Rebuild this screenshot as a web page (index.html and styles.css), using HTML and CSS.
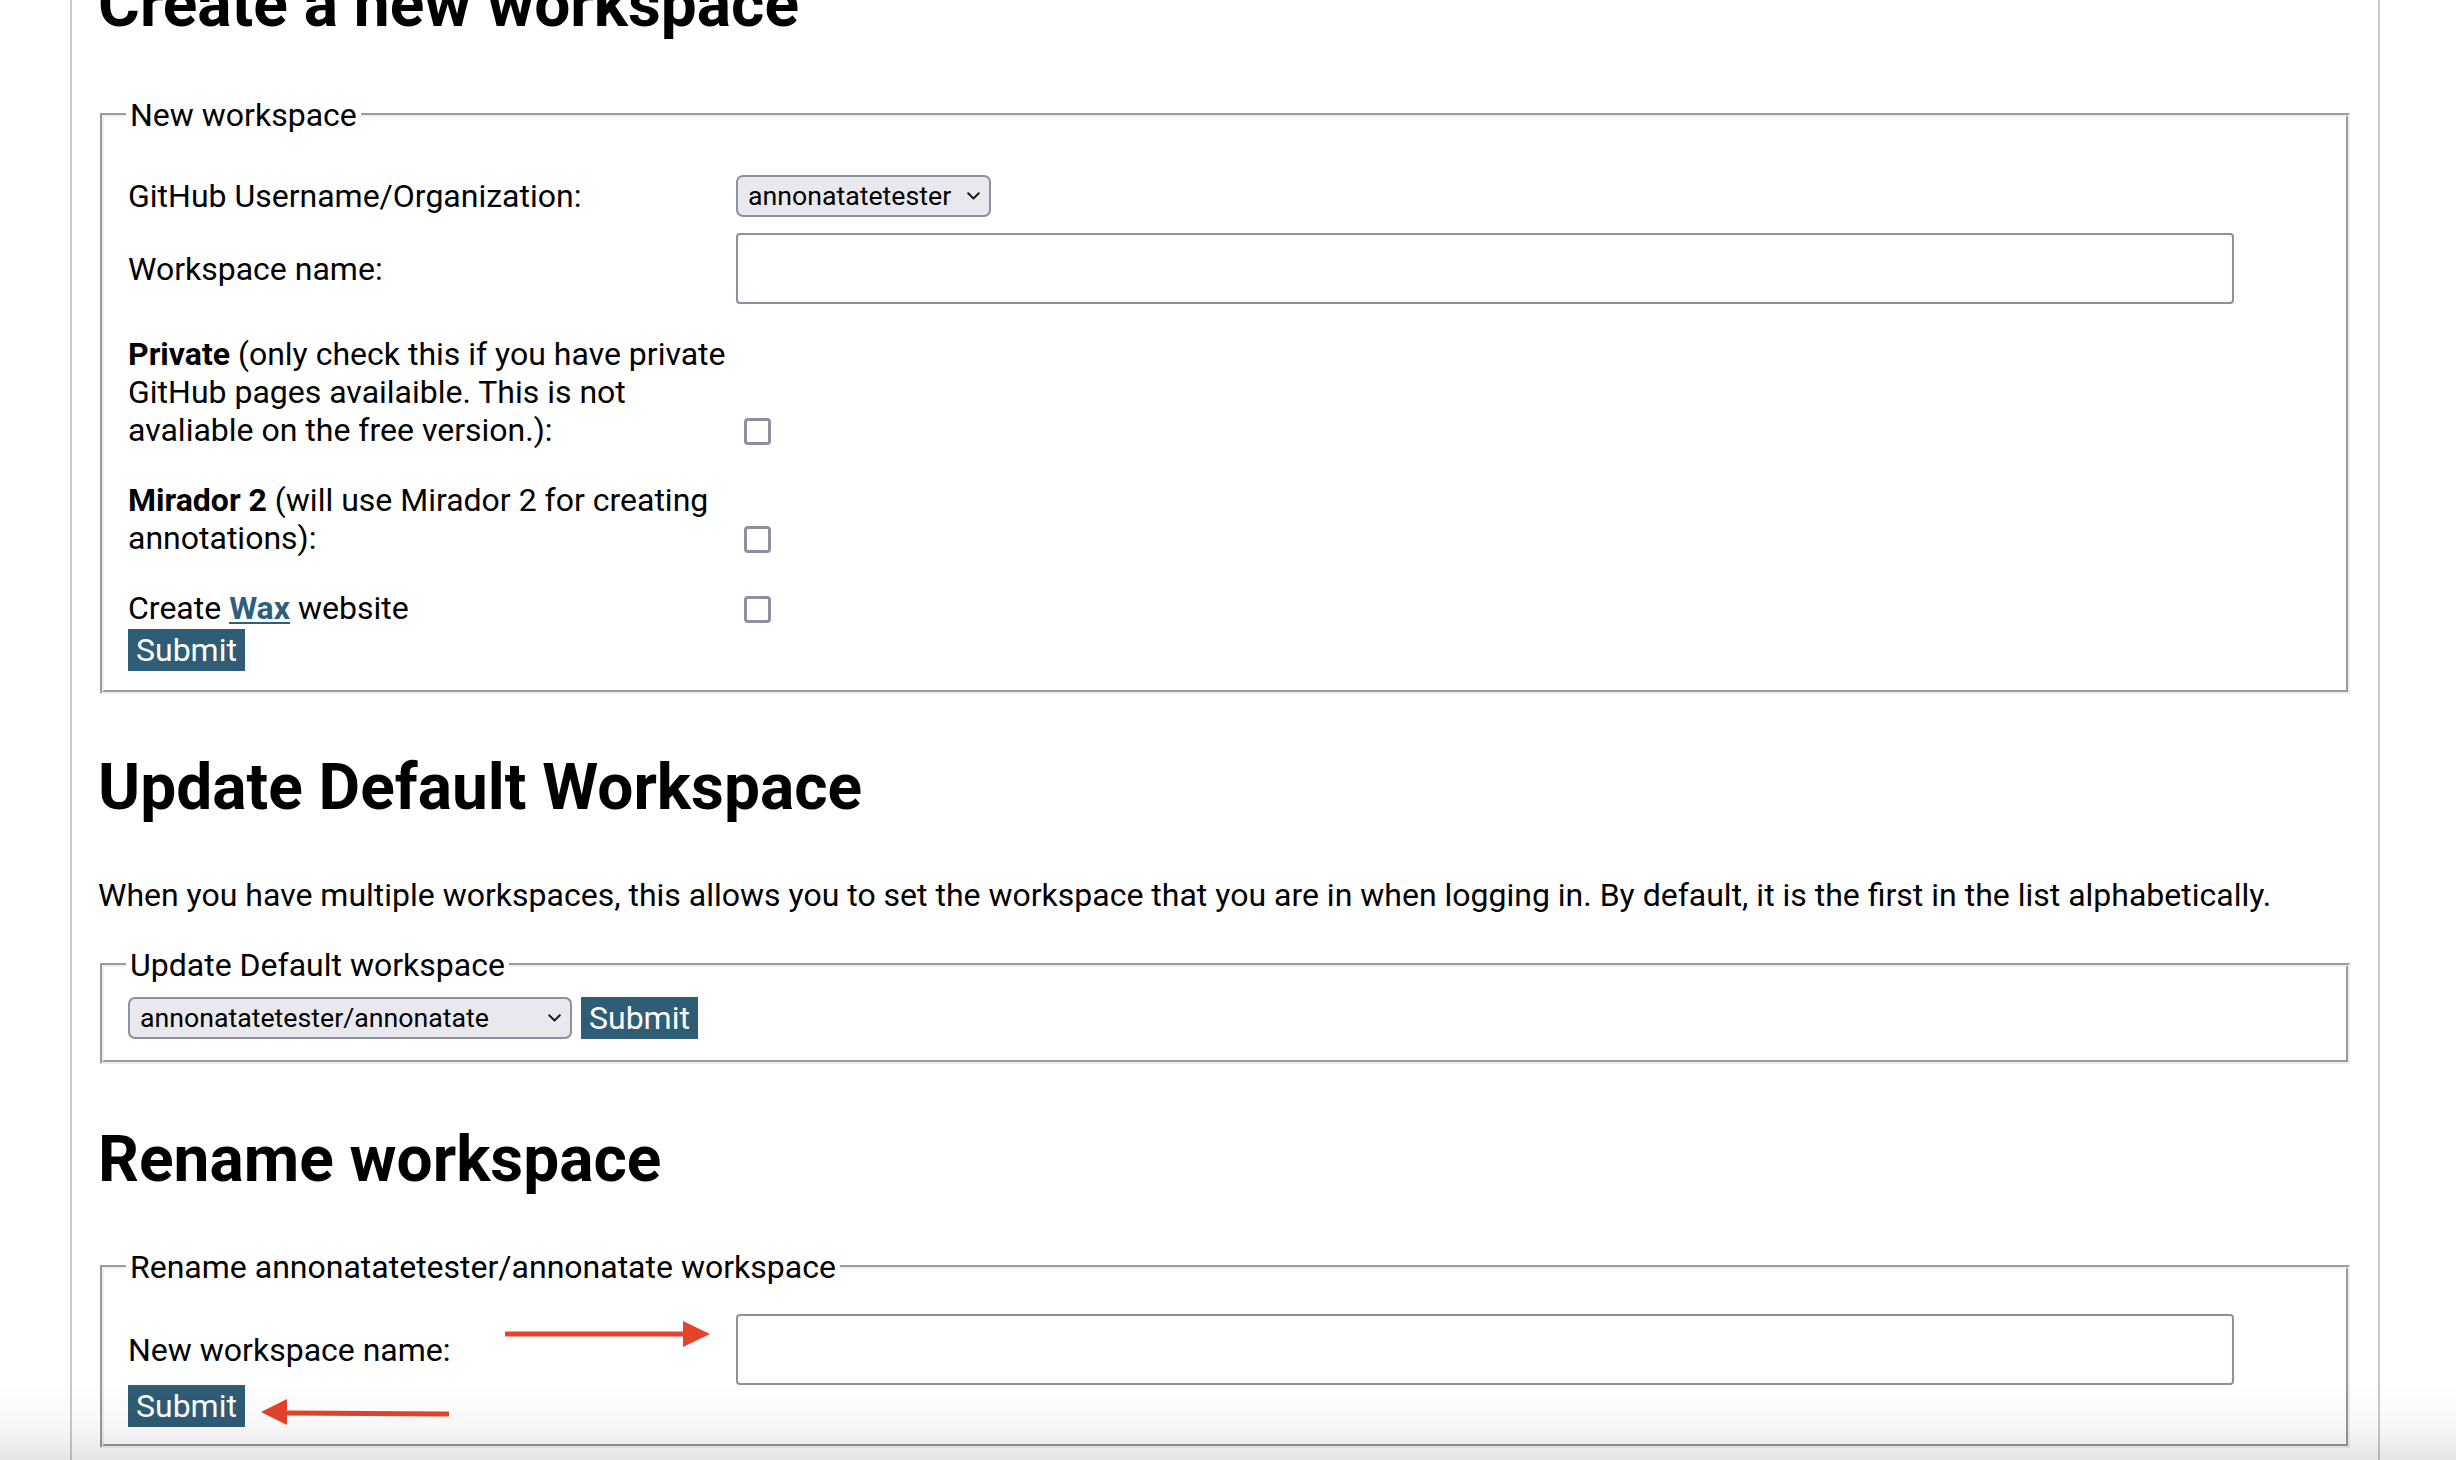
FILE: index.html
```html
<!DOCTYPE html>
<html lang="en">
<head>
<meta charset="utf-8">
<title>Workspaces</title>
<link rel="stylesheet" href="styles.css">
</head>
<body>
<div class="page">
  <h1 class="title title-first">Create a new workspace</h1>
  <fieldset class="box box-new">
    <legend>New workspace</legend>
    <div class="row row-select">
      <label class="label" for="owner">GitHub Username/Organization:</label>
      <span class="select-wrap select-owner">
        <select id="owner" class="select"><option>annonatatetester</option></select>
        <svg class="chevron" viewBox="0 0 13 8" aria-hidden="true"><path d="M1.2 1.2 6.5 6.5 11.8 1.2"/></svg>
      </span>
    </div>
    <div class="row row-name">
      <label class="label" for="wsname">Workspace name:</label>
      <input id="wsname" class="text-input" type="text">
    </div>
    <div class="row row-check">
      <label class="label label-multi" for="private"><b>Private</b> (only check this if you have private<br>GitHub pages availaible. This is not<br>avaliable on the free version.):</label>
      <input id="private" type="checkbox" class="check">
    </div>
    <div class="row row-check">
      <label class="label label-multi" for="mirador"><b>Mirador 2</b> (will use Mirador 2 for creating<br>annotations):</label>
      <input id="mirador" type="checkbox" class="check">
    </div>
    <div class="row row-check row-wax">
      <label class="label label-multi" for="wax">Create <a class="wax" href="#wax">Wax</a> website</label>
      <input id="wax" type="checkbox" class="check">
    </div>
    <button class="btn" type="button">Submit</button>
  </fieldset>

  <h2 class="title title-after-new">Update Default Workspace</h2>
  <p class="intro">When you have multiple workspaces, this allows you to set the workspace that you are in when logging in. By default, it is the first in the list alphabetically.</p>
  <fieldset class="box box-default">
    <legend>Update Default workspace</legend>
    <div class="default-row">
      <span class="select-wrap select-default">
        <select class="select"><option>annonatatetester/annonatate</option></select>
        <svg class="chevron" viewBox="0 0 13 8" aria-hidden="true"><path d="M1.2 1.2 6.5 6.5 11.8 1.2"/></svg>
      </span>
      <button class="btn" type="button">Submit</button>
    </div>
  </fieldset>

  <h2 class="title">Rename workspace</h2>
  <fieldset class="box box-rename">
    <legend>Rename annonatatetester/annonatate workspace</legend>
    <div class="row row-rename">
      <label class="label" for="newname">New workspace name:</label>
      <input id="newname" class="text-input" type="text">
    </div>
    <button class="btn" type="button">Submit</button>
  </fieldset>
</div>

<svg class="annotations" viewBox="0 0 2456 1460" aria-hidden="true">
  <polygon class="arrow" points="505,1331.5 684,1331.5 684,1336.5 505,1336.5"/>
  <polygon class="arrow" points="683,1321 710,1334 683,1347"/>
  <polygon class="arrow" points="286,1410.5 449,1411.5 449,1416.5 286,1415.5"/>
  <polygon class="arrow" points="261,1412 287,1399 287,1425"/>
</svg>
<div class="fade"></div>
</body>
</html>
```
FILE: styles.css
```css
* {
  box-sizing: border-box;
}

html,
body {
  margin: 0;
  padding: 0;
  overflow: hidden;
  background: #ffffff;
}

body {
  position: relative;
  height: 1460px;
  font-family: Roboto, "Liberation Sans", Arial, sans-serif;
  font-size: 32px;
  line-height: 38px;
  color: #000000;
}

.page {
  display: flow-root;
  margin-left: 70px;
  width: 2310px;
  min-height: 1460px;
  border-left: 2px solid #cacaca;
  border-right: 2px solid #cacaca;
  padding: 0 26px;
}

.title {
  font-size: 64px;
  line-height: 75px;
  font-weight: 700;
  margin: 58px 0 51px;
}

.title-first {
  margin-top: -33px;
  margin-bottom: 54px;
}

.title-after-new {
  margin-top: 56px;
}

.intro {
  margin: 0 0 32px;
}

.box {
  margin: 0 2px;
  min-width: 0;
  border: 4px groove #eeeeee;
  padding: 0 24px 17px;
}

.box legend {
  padding: 0 4px;
  margin-left: -2px;
  font-size: 32px;
  line-height: 38px;
}

.box-new {
  padding-top: 41px;
  padding-bottom: 19px;
}

.box-default {
  padding-top: 13px;
  padding-bottom: 21px;
}

.box-rename {
  padding-top: 28px;
}

.row {
  display: flex;
  align-items: center;
}

.label {
  flex: none;
  width: 608px;
}

.label-multi {
  white-space: nowrap;
}

.row-select {
  margin-bottom: 16px;
}

.row-name {
  margin-bottom: 31px;
}

.row-check {
  align-items: flex-end;
  margin-bottom: 32px;
}

.row-wax {
  margin-bottom: 2px;
}

.check {
  appearance: none;
  -webkit-appearance: none;
  flex: none;
  width: 27px;
  height: 27px;
  margin: 0 0 4px 8px;
  border: 3px solid #8f8f9d;
  border-radius: 4px;
  background: #ffffff;
}

.select-wrap {
  position: relative;
  display: inline-block;
  flex: none;
}

.select {
  appearance: none;
  -webkit-appearance: none;
  display: block;
  height: 42px;
  margin: 0;
  border: 2px solid #8f8f9d;
  border-radius: 7px;
  background: #e9e9ed;
  color: #000000;
  font-family: Roboto, "Liberation Sans", Arial, sans-serif;
  font-size: 26.7px;
  line-height: 38px;
  padding: 0 10px;
}

.select-owner .select {
  width: 255px;
}

.select-default .select {
  width: 444px;
}

.chevron {
  position: absolute;
  right: 11px;
  top: 17px;
  width: 13px;
  height: 8px;
  fill: none;
  stroke: #1a1a1a;
  stroke-width: 2;
  stroke-linecap: round;
  stroke-linejoin: round;
  pointer-events: none;
}

.text-input {
  flex: none;
  width: 1498px;
  height: 71px;
  margin: 0;
  border: 2px solid #8f8f9d;
  border-radius: 4px;
  background: #ffffff;
  font: inherit;
  padding: 0 10px;
}

.btn {
  display: block;
  margin: 0;
  border: 0;
  border-radius: 0;
  background: #2f5d75;
  color: #ffffff;
  font-family: Roboto, "Liberation Sans", Arial, sans-serif;
  font-size: 32px;
  line-height: 38px;
  padding: 2px 8px;
}

.default-row {
  display: flex;
  align-items: center;
  gap: 9px;
}

.wax {
  color: #2c5f7b;
  font-weight: 700;
  text-decoration: underline;
  text-decoration-thickness: 2px;
  text-underline-offset: 3px;
}

.annotations {
  position: absolute;
  left: 0;
  top: 0;
  width: 2456px;
  height: 1460px;
  pointer-events: none;
}

.arrow {
  fill: #e6432a;
}

.fade {
  position: fixed;
  left: 0;
  right: 0;
  bottom: 0;
  height: 76px;
  background: linear-gradient(to bottom, rgba(0, 0, 0, 0) 0%, rgba(0, 0, 0, 0.03) 55%, rgba(0, 0, 0, 0.1) 100%);
  pointer-events: none;
}
```
